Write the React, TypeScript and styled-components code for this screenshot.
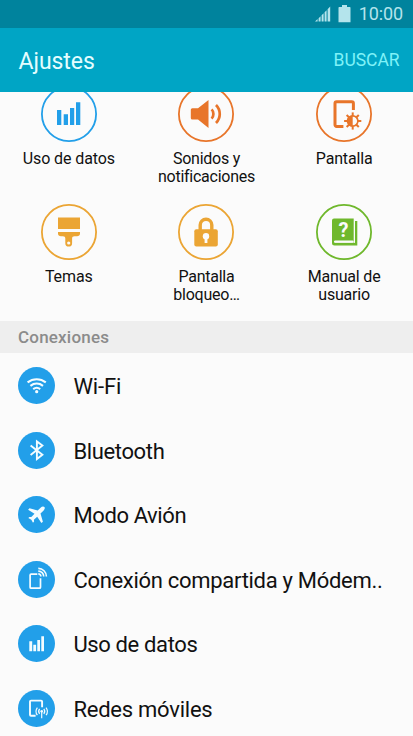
import React from "react";
import styled, { createGlobalStyle } from "styled-components";

const GlobalStyle = createGlobalStyle`
  * { box-sizing: border-box; }
  body { margin: 0; background: #fbfbfb; font-family: Roboto, "Liberation Sans", sans-serif; }
`;

const Screen = styled.div`
  width: 413px;
  height: 736px;
  overflow: hidden;
  display: flex;
  flex-direction: column;
  background: #fbfbfb;
  color: #111;
`;

const StatusBar = styled.div`
  flex: none;
  height: 28px;
  padding-right: 10px;
  display: flex;
  justify-content: flex-end;
  align-items: center;
  background: #00839d;
  color: #b4e4ec;
`;

const SignalIcon = styled.svg`
  width: 16px;
  height: 16px;
  margin-right: 7px;
`;

const BatteryIcon = styled.svg`
  width: 13px;
  height: 18px;
  margin: 0 8px 1px 0;
`;

const Clock = styled.span`
  font-size: 18px;
  line-height: 28px;
  letter-spacing: -0.1px;
`;

const Header = styled.header`
  flex: none;
  height: 64px;
  padding: 0 13.5px 0 18.5px;
  display: flex;
  align-items: center;
  justify-content: space-between;
  background: #00a5c5;
`;

const Title = styled.h1`
  margin: 3px 0 0;
  font-size: 23px;
  line-height: 28px;
  font-weight: 400;
  letter-spacing: -0.05px;
  color: #e4fdff;
`;

const SearchButton = styled.button`
  margin: 0;
  padding: 0;
  border: 0;
  background: none;
  font: 400 17.5px/24px Roboto, sans-serif;
  letter-spacing: -0.05px;
  color: #7ff2f8;
`;

const QuickGrid = styled.section`
  flex: none;
  height: 229px;
  overflow: hidden;
  display: grid;
  grid-template-columns: repeat(3, 137.67px);
  grid-template-rows: 117.5px 117.5px;
  align-content: end;
`;

const QuickItem = styled.div`
  display: flex;
  flex-direction: column;
  align-items: center;
`;

const QuickIcon = styled.svg`
  width: 56px;
  height: 56px;
  flex: none;
`;

const QuickLabel = styled.span<{ $spacing: number }>`
  margin-top: 8px;
  font-size: 16px;
  line-height: 18px;
  letter-spacing: ${(p) => p.$spacing}px;
  text-align: center;
  white-space: pre-line;
`;

const SectionTitle = styled.h2`
  flex: none;
  margin: 0;
  height: 32px;
  padding-left: 18px;
  font-size: 17px;
  line-height: 33px;
  font-weight: 500;
  letter-spacing: 0.2px;
  color: #8b8b8b;
  background: #eeeeee;
`;

const List = styled.ul`
  margin: 0;
  padding: 0.6px 0 0;
  list-style: none;
`;

const Row = styled.li`
  height: 64.5px;
  padding-left: 18px;
  display: flex;
  align-items: center;
  gap: 18.4px;
`;

const RowIcon = styled.svg`
  width: 37px;
  height: 37px;
  flex: none;
`;

const RowLabel = styled.span<{ $spacing: number }>`
  font-size: 22px;
  line-height: 30px;
  letter-spacing: ${(p) => p.$spacing}px;
  white-space: nowrap;
  padding-top: 3px;
`;

const ORANGE = "#e8752a";
const AMBER = "#eba534";
const GREEN = "#6fb82c";
const BLUE = "#229fe9";

const gearTeeth = [0, 45, 90, 135, 180, 225, 270, 315];

const quickItems = [
  {
    label: "Uso de datos",
    spacing: -0.1,
    color: BLUE,
    art: <path fill={BLUE} d="M16 24h4.3v15H16zM22.7 28.3H27V39h-4.3zM29 22h4.2v17H29zM35 16.3h4.3V39H35z" />,
  },
  {
    label: "Sonidos y\nnotificaciones",
    spacing: -0.25,
    color: ORANGE,
    art: (
      <>
        <path fill={ORANGE} d="M14.3 22.3H20L30.5 14v28L20 33.6h-5.7a1.5 1.5 0 0 1-1.5-1.5v-8.3a1.5 1.5 0 0 1 1.5-1.5z" />
        <path fill="none" stroke={ORANGE} strokeWidth="2.7" d="M33.6 23.4c2.4 2.4 2.4 6.8 0 9.2M38 19c5 5.1 5 12.9 0 18" />
      </>
    ),
  },
  {
    label: "Pantalla",
    spacing: -0.17,
    color: ORANGE,
    art: (
      <>
        <path fill="none" stroke={ORANGE} strokeWidth="3" d="M37.4 24v-6.6a1.6 1.6 0 0 0-1.6-1.6H20.6a1.6 1.6 0 0 0-1.6 1.6v21.4a1.6 1.6 0 0 0 1.6 1.6h6.8" />
        {gearTeeth.map((a) => (
          <path key={a} fill={ORANGE} d="M35.7 26.4h2v4h-2z" transform={`rotate(${a} 36.7 35)`} />
        ))}
        <circle cx="36.7" cy="35" r="5.2" fill="#fbfbfb" stroke={ORANGE} strokeWidth="1.7" />
        <path fill={ORANGE} d="M36.7 29.5a5.5 5.5 0 0 0 0 11z" />
      </>
    ),
  },
  {
    label: "Temas",
    spacing: -0.1,
    color: AMBER,
    art: (
      <>
        <path fill={AMBER} d="M17 13.5h22V25H17zM17 28h22v1.5c0 1.8-1.2 2.7-3 2.7h-2.5c-1.6 0-2.4.8-2.4 2.2v4.8a3.4 3.4 0 0 1-6.8 0v-4.8c0-1.4-.8-2.2-2.4-2.2H20c-1.8 0-3-.9-3-2.7z" />
        <circle cx="27.7" cy="39" r="1.6" fill="#fbfbfb" />
      </>
    ),
  },
  {
    label: "Pantalla\nbloqueo…",
    spacing: -0.25,
    color: AMBER,
    art: (
      <>
        <path fill="none" stroke={AMBER} strokeWidth="3.4" d="M22.2 26v-5a5.8 5.8 0 0 1 11.6 0v5" />
        <rect x="16.3" y="25.2" width="23.5" height="17.3" rx="2" fill={AMBER} />
        <circle cx="28" cy="32.2" r="3.2" fill="#fbfbfb" />
        <path fill="#fbfbfb" d="M26.6 32h2.8v7h-2.8z" />
      </>
    ),
  },
  {
    label: "Manual de\nusuario",
    spacing: -0.2,
    color: GREEN,
    art: (
      <>
        <path fill={GREEN} d="M18 14.5h19.7v24.3H19.2a1 1 0 0 0 0 1.4H39V17h2.3v24.5H18.5A2.5 2.5 0 0 1 16 39V16.5a2 2 0 0 1 2-2z" />
        <rect x="18" y="36.4" width="19.7" height="2.5" rx="1.2" fill="#fbfbfb" />
        <rect x="18" y="38.9" width="22" height="2" fill={GREEN} />
        <text x="27.6" y="32.6" textAnchor="middle" fontFamily="Roboto, sans-serif" fontWeight="700" fontSize="20" fill="#fbfbfb">
          ?
        </text>
      </>
    ),
  },
];

const stroke = { fill: "none", stroke: "#f4fcff" };

const connections = [
  {
    label: "Wi-Fi",
    spacing: -0.15,
    art: (
      <>
        <path {...stroke} strokeWidth="2.1" d="M9.6 15.4c5.4-4.2 12.8-4.2 18.2 0M12.4 18.9c3.8-3 8.8-3 12.6 0M15.2 22.1c2.2-1.7 4.8-1.7 7 0" />
        <circle cx="18.7" cy="24.7" r="1.6" fill="#f4fcff" />
      </>
    ),
  },
  {
    label: "Bluetooth",
    spacing: -0.36,
    art: <path {...stroke} strokeWidth="1.9" d="M12.6 13.5l11.8 9.3-5.5 4.2V9.4l5.5 4.2-11.8 9.3" />,
  },
  {
    label: "Modo Avión",
    spacing: -0.38,
    art: (
      <path
        fill="#f4fcff"
        d="M26.4 11.1c.8.8.3 2.3-1 3.6l-2.9 2.9 2.4 8.1-1.5 1.4-4.2-6.4-3.3 3.1.2 1.8-1.1 1.1-1.7-3-3-1.7 1.1-1.1 1.9.2 3.2-3.3-6.4-4.1 1.4-1.5 8.2 2.3 2.9-2.8c1.3-1.3 3-1.4 3.8-.6z"
      />
    ),
  },
  {
    label: "Conexión compartida y Módem..",
    spacing: -0.3,
    art: (
      <>
        <path {...stroke} strokeWidth="1.7" d="M19.3 13.2h-6.2a1 1 0 0 0-1 1v12a1 1 0 0 0 1 1h8.4a1 1 0 0 0 1-1v-8.9" />
        <path {...stroke} strokeWidth="1.6" d="M20.3 12.9a2.6 2.6 0 0 1 2.6 2.6M20.3 10.1a5.4 5.4 0 0 1 5.4 5.4M20.3 7.4a8.1 8.1 0 0 1 8.1 8.1" />
      </>
    ),
  },
  {
    label: "Uso de datos",
    spacing: -0.36,
    art: <path fill="#f4fcff" d="M11.3 16.3h2.9v10h-2.9zM15.3 19.7h2.8v6.6h-2.8zM19.3 15H22v11.3h-2.7zM23.3 11.3H26v15h-2.7z" />,
  },
  {
    label: "Redes móviles",
    spacing: -0.24,
    art: (
      <>
        <path {...stroke} strokeWidth="1.9" d="M24.1 17.3v-5.7a1 1 0 0 0-1-1H13a1 1 0 0 0-1 1v13.1a1 1 0 0 0 1 1h4.6" />
        <circle cx="23.7" cy="21.3" r="1.3" fill="#f4fcff" />
        <path {...stroke} strokeWidth="1.2" d="M23.7 21.5v6.8M21.6 18.9c-1.1 1.4-1.1 3.6 0 5M25.8 18.9c1.1 1.4 1.1 3.6 0 5M19.4 17.6c-1.7 2.2-1.7 5.4 0 7.6M28 17.6c1.7 2.2 1.7 5.4 0 7.6" />
      </>
    ),
  },
];

export default function App() {
  return (
    <>
      <GlobalStyle />
      <Screen>
        <StatusBar>
          <SignalIcon viewBox="0 0 16 16" fill="currentColor">
            <path d="M0 15.5l2.6-2.4v2.4zM3.6 12.2l2-1.9v5.2h-2zM6.6 9.2l2-2v8.3h-2zM9.6 6.2l2-2v11.3h-2zM12.6 3.2L15.2.5v15h-2.6z" />
          </SignalIcon>
          <BatteryIcon viewBox="0 0 13 18" fill="currentColor">
            <path d="M4 0h5v2h2.8q.7 0 .7.7V17.3H.5V2.7Q.5 2 1.2 2H4z" />
          </BatteryIcon>
          <Clock>10:00</Clock>
        </StatusBar>
        <Header>
          <Title>Ajustes</Title>
          <SearchButton>BUSCAR</SearchButton>
        </Header>
        <QuickGrid>
          {quickItems.map((item) => (
            <QuickItem key={item.label}>
              <QuickIcon viewBox="0 0 56 56">
                <circle cx="28" cy="28" r="27.1" fill="none" stroke={item.color} strokeWidth="1.8" />
                {item.art}
              </QuickIcon>
              <QuickLabel $spacing={item.spacing}>{item.label}</QuickLabel>
            </QuickItem>
          ))}
        </QuickGrid>
        <SectionTitle>Conexiones</SectionTitle>
        <List>
          {connections.map((item) => (
            <Row key={item.label}>
              <RowIcon viewBox="0 0 37 37">
                <circle cx="18.5" cy="18.5" r="18.5" fill={BLUE} />
                {item.art}
              </RowIcon>
              <RowLabel $spacing={item.spacing}>{item.label}</RowLabel>
            </Row>
          ))}
        </List>
      </Screen>
    </>
  );
}
